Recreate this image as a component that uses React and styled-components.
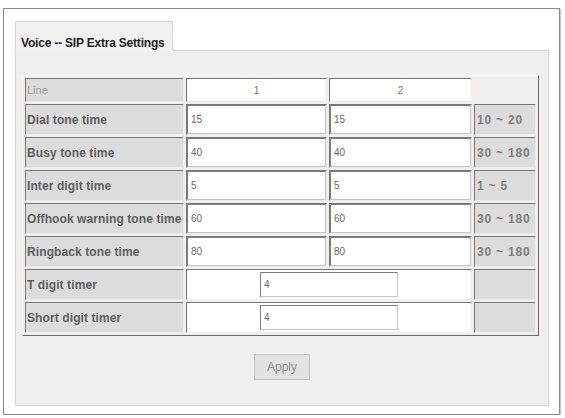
import styled, { createGlobalStyle } from 'styled-components'

const Global = createGlobalStyle`
  body {
    margin: 0;
    background: #ffffff;
    font-family: "Liberation Sans", Arial, sans-serif;
  }
`

const Frame = styled.div`
  box-sizing: border-box;
  width: 557px;
  height: 407px;
  margin: 8px 0 0 3px;
  padding: 12px 0 0 11px;
  border: 1px solid #8a8a8a;
  box-shadow: 1px 1px 1px #c8c8c8;
  background: #ffffff;
`

const Tab = styled.div`
  position: relative;
  z-index: 1;
  box-sizing: border-box;
  width: 158px;
  height: 30px;
  margin-bottom: -1px;
  padding: 14px 0 0 5px;
  border: 1px solid #d6d6d6;
  border-bottom: 1px solid #f1f1f0;
  background: #f1f1f0;
  font-size: 12px;
  font-weight: bold;
  letter-spacing: -0.2px;
  color: #1e1e1e;
  white-space: nowrap;
`

const Panel = styled.div`
  box-sizing: border-box;
  width: 534px;
  height: 356px;
  padding: 24px 0 0 6px;
  border: 1px solid #d6d6d6;
  background: #f0efee;
`

const Grid = styled.table`
  width: 517px;
  table-layout: fixed;
  border-collapse: separate;
  border-spacing: 2px;
  border: 1px solid;
  border-color: #f7f7f7 #6a6a6a #6a6a6a #f7f7f7;
`

const Row = styled.tr`
  height: ${p => p.$h}px;
`

const Cell = styled.td`
  box-sizing: border-box;
  padding: 0;
  border: 1px solid;
  border-color: #777777 #ececec #ececec #777777;
  vertical-align: middle;
`

const Label = styled(Cell)`
  padding-left: 1px;
  background: #dcdcdc;
  font-size: ${p => (p.$light ? '11px' : '12px')};
  font-weight: ${p => (p.$light ? 'normal' : 'bold')};
  letter-spacing: ${p => (p.$light ? '0' : '0.1px')};
  color: ${p => (p.$light ? '#9a9a9a' : '#5e5e5e')};
  white-space: nowrap;
  overflow: hidden;
`

const Head = styled(Cell)`
  background: #ffffff;
  text-align: center;
  font-size: 10px;
  color: #777777;
`

const Field = styled(Cell)`
  background: #ffffff;
  text-align: ${p => (p.$center ? 'center' : 'left')};
`

const Range = styled(Cell)`
  padding-left: 2px;
  background: #dcdcdc;
  font-size: 12px;
  font-weight: bold;
  letter-spacing: 0.8px;
  color: #808080;
  white-space: nowrap;
`

const Blank = styled.td`
  padding: 0;
  background: transparent;
`

const Input = styled.input`
  box-sizing: border-box;
  display: block;
  width: ${p => (p.$w ? `${p.$w}px` : '100%')};
  height: ${p => (p.$hh ? `${p.$hh}px` : '29px')};
  margin: ${p => (p.$w ? '0 auto' : '0')};
  padding: 0 0 0 3px;
  border: 1px solid;
  border-color: #7e7e7e #c4c4c4 #c4c4c4 #7e7e7e;
  background: #ffffff;
  font-family: "Liberation Sans", Arial, sans-serif;
  font-size: 10px;
  color: #6a6a6a;
  outline: none;
`

const Actions = styled.div`
  display: flex;
  justify-content: center;
  margin-top: 18px;
  padding-right: 6px;
`

const Button = styled.button`
  box-sizing: border-box;
  width: 56px;
  height: 26px;
  border: 1px solid #c2c2c2;
  background: #e2e2e2;
  font-family: "Liberation Sans", Arial, sans-serif;
  font-size: 12px;
  color: #8c8c8c;
`

const rows = [
  { name: 'Dial tone time', a: '15', b: '15', range: '10 ~ 20' },
  { name: 'Busy tone time', a: '40', b: '40', range: '30 ~ 180' },
  { name: 'Inter digit time', a: '5', b: '5', range: '1 ~ 5' },
  { name: 'Offhook warning tone time', a: '60', b: '60', range: '30 ~ 180' },
  { name: 'Ringback tone time', a: '80', b: '80', range: '30 ~ 180' },
]

const timers = [
  { name: 'T digit timer', v: '4' },
  { name: 'Short digit timer', v: '4' },
]

export default function App() {
  return (
    <>
      <Global />
      <Frame>
        <Tab>Voice -- SIP Extra Settings</Tab>
        <Panel>
          <Grid>
            <colgroup>
              <col style={{ width: 159 }} />
              <col style={{ width: 141 }} />
              <col style={{ width: 143 }} />
              <col style={{ width: 62 }} />
            </colgroup>
            <tbody>
              <Row $h={24}>
                <Label $light>Line</Label>
                <Head>1</Head>
                <Head>2</Head>
                <Blank />
              </Row>
              {rows.map(r => (
                <Row $h={31} key={r.name}>
                  <Label>{r.name}</Label>
                  <Field><Input defaultValue={r.a} /></Field>
                  <Field><Input defaultValue={r.b} /></Field>
                  <Range>{r.range}</Range>
                </Row>
              ))}
              {timers.map(t => (
                <Row $h={31} key={t.name}>
                  <Label>{t.name}</Label>
                  <Field colSpan={2} $center>
                    <Input $w={138} $hh={25} defaultValue={t.v} />
                  </Field>
                  <Range />
                </Row>
              ))}
            </tbody>
          </Grid>
          <Actions>
            <Button disabled>Apply</Button>
          </Actions>
        </Panel>
      </Frame>
    </>
  )
}
